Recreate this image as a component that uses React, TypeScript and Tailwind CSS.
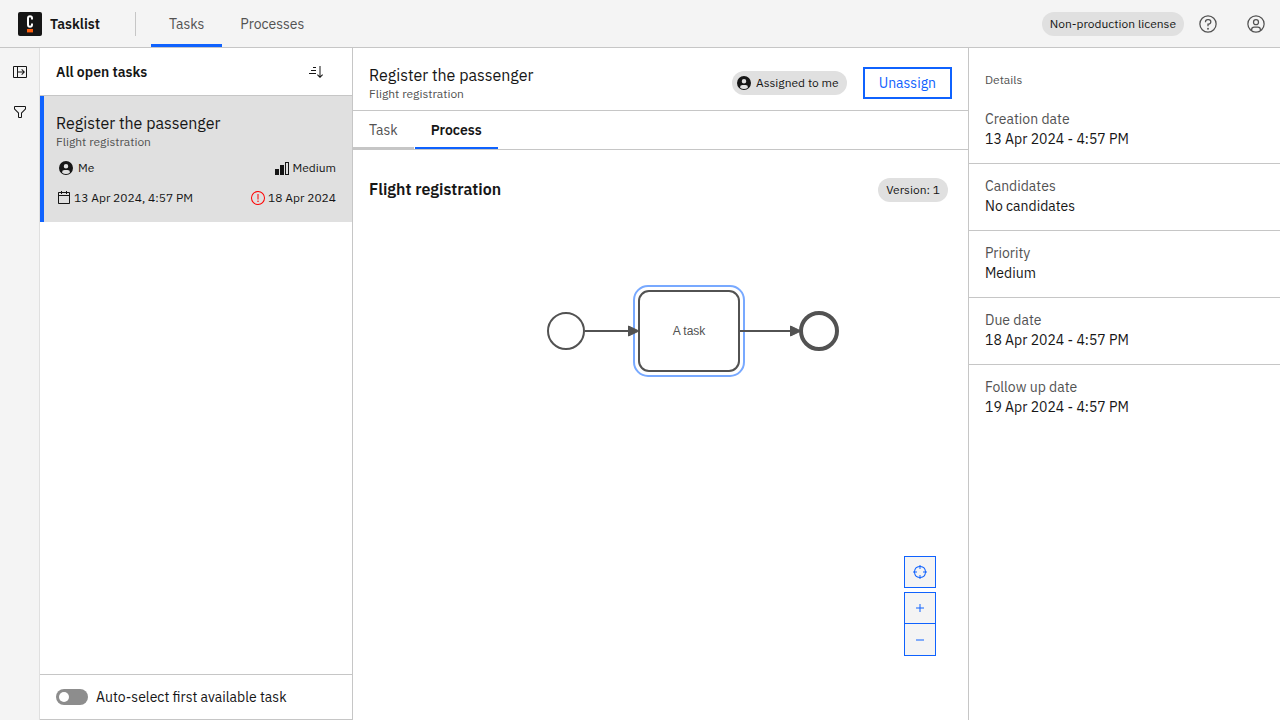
import React, { useState } from "react";

type IconProps = { className?: string; children: React.ReactNode };

function Icon({ className = "size-4", children }: IconProps) {
  return (
    <svg viewBox="0 0 32 32" fill="currentColor" aria-hidden="true" className={"shrink-0 " + className}>
      {children}
    </svg>
  );
}

const RING = "M16 2A14 14 0 1 0 30 16 14 14 0 0 0 16 2Zm0 26A12 12 0 1 1 28 16 12 12 0 0 1 16 28Z";

function UserFilledIcon() {
  return (
    <Icon>
      <path
        fillRule="evenodd"
        d="M16 2A14 14 0 1 0 30 16 14 14 0 0 0 16 2ZM16 8a4.5 4.5 0 1 1-4.5 4.5A4.5 4.5 0 0 1 16 8ZM8.0071 24.93A4.9957 4.9957 0 0 1 13 20h6a4.9958 4.9958 0 0 1 4.9929 4.93 11.94 11.94 0 0 1-15.9858 0Z"
      />
    </Icon>
  );
}

function CalendarIcon() {
  return (
    <Icon>
      <path d="M26 4h-4V2h-2v2h-8V2h-2v2H6c-1.1 0-2 .9-2 2v20c0 1.1.9 2 2 2h20c1.1 0 2-.9 2-2V6c0-1.1-.9-2-2-2zm0 22H6V12h20V26zm0-16H6V6h4v2h2V6h8v2h2V6h4V10z" />
    </Icon>
  );
}

function Tag({ children }: { children: React.ReactNode }) {
  return (
    <span className="flex h-6 items-center gap-1 rounded-full bg-[#e0e0e0] px-2 text-xs whitespace-nowrap">
      {children}
    </span>
  );
}

function TaskTitle() {
  return (
    <div>
      <h2 className="text-base leading-[22px]">Register the passenger</h2>
      <p className="text-xs leading-4 text-[#525252]">Flight registration</p>
    </div>
  );
}

function Header() {
  return (
    <header className="flex h-12 shrink-0 items-center border-b border-[#c6c6c6] bg-[#f4f4f4] pl-[18px]">
      <a href="#home" className="flex items-center gap-2 text-sm font-semibold">
        <svg viewBox="0 0 24 24" className="size-6" aria-hidden="true">
          <rect width="24" height="24" rx="2" fill="#161616" />
          <path
            d="M14 7.4V6.3a2 2 0 0 0-4 0v6.4a2 2 0 0 0 4 0v-1.2"
            fill="none"
            stroke="#fff"
            strokeWidth="2"
          />
          <rect x="9" y="17" width="6" height="3.4" fill="#fc5d0d" />
        </svg>
        Tasklist
      </a>
      <span className="ml-[35px] h-6 w-px bg-[#c6c6c6]" />
      <nav className="ml-[15px] flex self-stretch text-sm text-[#525252]">
        <a
          href="#tasks"
          aria-current="page"
          className="flex items-center border-b-[3px] border-[#0f62fe] px-[18px] pt-[3px]"
        >
          Tasks
        </a>
        <a href="#processes" className="flex items-center px-[18px]">
          Processes
        </a>
      </nav>
      <div className="ml-auto flex items-center self-stretch">
        <Tag>Non-production license</Tag>
        <button aria-label="Help" className="flex size-12 items-center justify-center text-[#525252]">
          <Icon className="size-5">
            <path d={RING} />
            <circle cx="16" cy="23.5" r="1.5" />
            <path d="M17 8h-1.5A4.49 4.49 0 0 0 11 12.5V13h2v-.5A2.5 2.5 0 0 1 15.5 10H17a2.5 2.5 0 0 1 0 5h-2v4.5h2V17a4.5 4.5 0 0 0 0-9Z" />
          </Icon>
        </button>
        <button aria-label="Settings" className="flex size-12 items-center justify-center text-[#525252]">
          <Icon className="size-5">
            <path d="M16 8a5 5 0 1 0 5 5A5 5 0 0 0 16 8Zm0 8a3 3 0 1 1 3-3 3.0034 3.0034 0 0 1-3 3Z" />
            <path d="M16 2A14 14 0 1 0 30 16 14.0158 14.0158 0 0 0 16 2ZM10 26.3765V25a3.0033 3.0033 0 0 1 3-3h6a3.0033 3.0033 0 0 1 3 3v1.3765a11.8989 11.8989 0 0 1-12 0Zm13.9925-1.4507A5.0016 5.0016 0 0 0 19 20H13a5.0016 5.0016 0 0 0-4.9925 4.9258 12 12 0 1 1 15.985 0Z" />
          </Icon>
        </button>
      </div>
    </header>
  );
}

function Rail() {
  return (
    <nav aria-label="Filters" className="flex w-10 shrink-0 flex-col gap-2 border-r border-[#e0e0e0] bg-[#f4f4f4] pt-2">
      <button aria-label="Expand to show filters" className="flex h-8 items-center justify-center">
        <Icon>
          <path d="M28 4H4a2 2 0 0 0-2 2v20a2 2 0 0 0 2 2h24a2 2 0 0 0 2-2V6a2 2 0 0 0-2-2ZM10 26H4V6h6Zm18 0H12V17h10.17l-3.58 3.59L20 22l6-6-6-6-1.41 1.41L22.17 15H12V6h16Z" />
        </Icon>
      </button>
      <button aria-label="Filter tasks" className="flex h-8 items-center justify-center">
        <Icon>
          <path d="M18 28H14a2 2 0 0 1-2-2V18.41L4.59 11A2 2 0 0 1 4 9.59V6A2 2 0 0 1 6 4H26a2 2 0 0 1 2 2V9.59A2 2 0 0 1 27.41 11L20 18.41V26A2 2 0 0 1 18 28ZM6 6V9.59l8 8V26h4V17.59l8-8V6Z" />
        </Icon>
      </button>
    </nav>
  );
}

function TaskList() {
  const [auto, setAuto] = useState(false);
  return (
    <section className="flex w-[313px] shrink-0 flex-col border-r border-[#c6c6c6]">
      <div className="flex h-12 items-center justify-between border-b border-[#c6c6c6] pr-5 pl-4">
        <h1 className="text-sm font-semibold">All open tasks</h1>
        <button aria-label="Sort tasks" className="flex size-8 items-center justify-center">
          <Icon>
            <path d="M18 22L19.414 20.586 23 24.172 23 4 25 4 25 24.172 28.586 20.586 30 22 24 28 18 22z" />
            <path d="M2 18h14v2H2zM6 12h10v2H6zM10 6h6v2h-6z" />
          </Icon>
        </button>
      </div>
      <a href="#task" className="block border-l-4 border-[#0f62fe] bg-[#e0e0e0] py-4 pr-4 pl-3">
        <TaskTitle />
        <div className="mt-[10px] flex h-4 items-center justify-between text-xs">
          <span className="flex items-center gap-1 pl-0.5">
            <UserFilledIcon />
            Me
          </span>
          <span className="flex items-center gap-0.5">
            <Icon>
              <path d="M30 30H22V4h8Zm-6-2h4V6H24ZM20 30H12V10h8zM10 30H2V18h8z" />
            </Icon>
            Medium
          </span>
        </div>
        <div className="mt-[14px] flex h-4 items-center justify-between text-xs">
          <span className="flex items-center gap-0.5">
            <CalendarIcon />
            13 Apr 2024, 4:57 PM
          </span>
          <span className="flex items-center gap-0.5">
            <Icon className="size-4 text-[#ff0000]">
              <path d={RING} />
              <path d="M15 8h2v11h-2z" />
              <circle cx="16" cy="22.5" r="1.5" />
            </Icon>
            18 Apr 2024
          </span>
        </div>
      </a>
      <label className="mt-auto flex h-[46px] items-center gap-2 border-y border-[#c6c6c6] px-4 text-sm">
        <input
          type="checkbox"
          role="switch"
          checked={auto}
          onChange={(e) => setAuto(e.target.checked)}
          className="h-4 w-8 appearance-none rounded-full bg-[#8d8d8d] before:m-[3px] before:block before:size-[10px] before:rounded-full before:bg-white checked:bg-[#24a148] checked:before:ml-[19px]"
        />
        Auto-select first available task
      </label>
    </section>
  );
}

function Diagram() {
  return (
    <svg
      width="300"
      height="100"
      viewBox="543 281 300 100"
      role="img"
      aria-label="Process diagram"
      className="mt-[79px] ml-[190px]"
    >
      <g fill="none" stroke="#525252" strokeWidth="2">
        <circle cx="566" cy="331" r="18" />
        <rect x="634" y="286" width="110" height="90" rx="14" stroke="#78a9ff" />
        <rect x="639" y="291" width="100" height="80" rx="10" fill="#fff" />
        <path d="M585 331H630M740 331H792" />
        <circle cx="819" cy="331" r="18" strokeWidth="4" />
      </g>
      <path d="M628.5 326L639 331l-10.500 5ZM790.500 326L801 331l-10.500 5Z" fill="#525252" stroke="#525252" />
      <text x="689" y="335" textAnchor="middle" fontSize="12" fill="#525252" fontFamily="Liberation Sans, Arial, sans-serif">
        A task
      </text>
    </svg>
  );
}

const control = "flex w-8 items-center justify-center border border-[#0f62fe] bg-[#f4f4f4] text-[#0f62fe]";

function TaskPanel() {
  return (
    <main className="flex min-w-0 flex-1 flex-col">
      <div className="flex h-[63px] items-center justify-between border-b border-[#c6c6c6] px-4 pt-2">
        <TaskTitle />
        <div className="flex items-center gap-4">
          <Tag>
            <span className="-ml-1">
              <UserFilledIcon />
            </span>
            Assigned to me
          </Tag>
          <button className="h-8 border-2 border-[#0f62fe] px-[14px] text-sm text-[#0f62fe]">Unassign</button>
        </div>
      </div>
      <div role="tablist" className="flex h-[39px] gap-px border-b border-[#c6c6c6] text-sm">
        <button role="tab" aria-selected="false" className="border-b-2 border-[#c6c6c6] px-4 pt-0.5 text-[#525252]">
          Task
        </button>
        <button role="tab" aria-selected="true" className="border-b-2 border-[#0f62fe] px-4 pt-0.5 font-semibold">
          Process
        </button>
      </div>
      <div role="tabpanel" className="relative flex-1">
        <div className="flex items-start justify-between pt-7 pr-5 pl-4">
          <h3 className="text-base leading-[22px] font-semibold">Flight registration</h3>
          <Tag>Version: 1</Tag>
        </div>
        <Diagram />
        <div className="absolute right-8 bottom-16 flex flex-col">
          <button aria-label="Reset diagram zoom" className={"mb-1 h-8 " + control}>
            <Icon>
              <path d="M30 15H27.95A12.0066 12.0066 0 0 0 17 4.05V2H15V4.05A12.0066 12.0066 0 0 0 4.05 15H2v2H4.05A12.0066 12.0066 0 0 0 15 27.95V30h2V27.95A12.0066 12.0066 0 0 0 27.95 17H30ZM17 25.95V22H15v3.95A10.0166 10.0166 0 0 1 6.05 17H10V15H6.05A10.0166 10.0166 0 0 1 15 6.05V10h2V6.05A10.0166 10.0166 0 0 1 25.95 15H22v2h3.95A10.0166 10.0166 0 0 1 17 25.95Z" />
            </Icon>
          </button>
          <button aria-label="Zoom in diagram" className={"h-8 " + control}>
            <Icon>
              <path d="M17 15V8h-2v7H8v2h7v7h2v-7h7v-2z" />
            </Icon>
          </button>
          <button aria-label="Zoom out diagram" className={"h-8 border-t-0 " + control}>
            <Icon>
              <path d="M8 15h16v2H8z" />
            </Icon>
          </button>
        </div>
      </div>
    </main>
  );
}

const details = [
  { label: "Creation date", value: "13 Apr 2024 - 4:57 PM" },
  { label: "Candidates", value: "No candidates" },
  { label: "Priority", value: "Medium" },
  { label: "Due date", value: "18 Apr 2024 - 4:57 PM" },
  { label: "Follow up date", value: "19 Apr 2024 - 4:57 PM" },
];

function Details() {
  return (
    <aside className="w-[312px] shrink-0 border-l border-[#c6c6c6] pt-6">
      <h2 className="px-4 pb-[9px] text-xs text-[#525252]">Details</h2>
      <dl className="divide-y divide-[#c6c6c6] text-sm">
        {details.map(({ label, value }) => (
          <div key={label} className="px-4 pt-3 pb-[14px]">
            <dt className="text-[#525252]">{label}</dt>
            <dd>{value}</dd>
          </div>
        ))}
      </dl>
    </aside>
  );
}

export default function App() {
  return (
    <div className="flex min-h-screen flex-col bg-white font-['IBM_Plex_Sans','Open_Sans',sans-serif] text-[#161616]">
      <Header />
      <div className="flex flex-1">
        <Rail />
        <TaskList />
        <TaskPanel />
        <Details />
      </div>
    </div>
  );
}
